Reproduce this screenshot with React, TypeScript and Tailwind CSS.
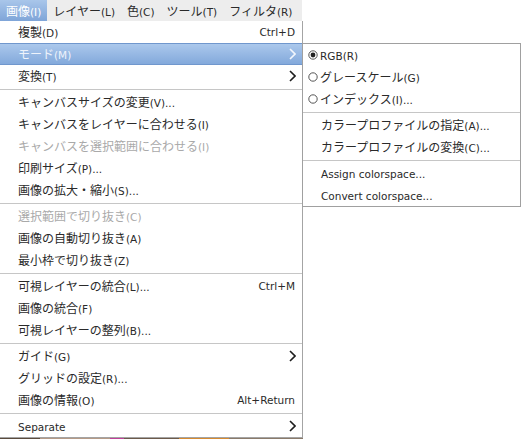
type Item =
  | { sep: true }
  | { sep?: false; label: string; key?: string; sub?: boolean; off?: boolean; hot?: boolean };

const mainItems: Item[] = [
  { label: "複製(D)", key: "Ctrl+D" },
  { label: "モード(M)", sub: true, hot: true },
  { label: "変換(T)", sub: true },
  { sep: true },
  { label: "キャンバスサイズの変更(V)..." },
  { label: "キャンバスをレイヤーに合わせる(I)" },
  { label: "キャンバスを選択範囲に合わせる(I)", off: true },
  { label: "印刷サイズ(P)..." },
  { label: "画像の拡大・縮小(S)..." },
  { sep: true },
  { label: "選択範囲で切り抜き(C)", off: true },
  { label: "画像の自動切り抜き(A)" },
  { label: "最小枠で切り抜き(Z)" },
  { sep: true },
  { label: "可視レイヤーの統合(L)...", key: "Ctrl+M" },
  { label: "画像の統合(F)" },
  { label: "可視レイヤーの整列(B)..." },
  { sep: true },
  { label: "ガイド(G)", sub: true },
  { label: "グリッドの設定(R)..." },
  { label: "画像の情報(O)", key: "Alt+Return" },
  { sep: true },
  { label: "Separate", sub: true },
];

const menuBar = ["画像(I)", "レイヤー(L)", "色(C)", "ツール(T)", "フィルタ(R)"];

const cjk = /([\u3000-\u30ff\u3400-\u9fff\uff00-\uffef]+)/;

// mixed runs: japanese glyphs a bit larger than the latin ones, like the gtk fallback
function Txt({ s }: { s: string }) {
  return (
    <span className="whitespace-nowrap">
      {s.split(cjk).filter(Boolean).map((part, i) =>
        cjk.test(part) ? (
          <span key={i} className="text-[12px]">{part}</span>
        ) : (
          <span key={i} className="text-[10.5px]">{part}</span>
        )
      )}
    </span>
  );
}

function Chevron({ light }: { light?: boolean }) {
  return (
    <svg width="7" height="12" viewBox="0 0 7 12" className="shrink-0">
      <path d="M1 1 L6 6 L1 11" fill="none" stroke={light ? "#f2f6fc" : "#1e1e1e"} strokeWidth="1.6" />
    </svg>
  );
}

function Radio({ on }: { on?: boolean }) {
  return (
    <svg width="10" height="10" viewBox="0 0 10 10" className="shrink-0">
      <circle cx="5" cy="5" r="4.2" fill="none" stroke="#444" strokeWidth="0.9" />
      {on && <circle cx="5" cy="5" r="2.4" fill="#222" />}
    </svg>
  );
}

function Sep() {
  return (
    <div className="h-[4px] flex items-center">
      <div className="h-px w-full bg-[#c6c6c6]" />
    </div>
  );
}

export default function App() {
  return (
    <div
      className="relative w-[521px] h-[439px] overflow-hidden bg-white text-[#2a2a2a] leading-none"
      style={{ fontFamily: '"DejaVu Sans", "Noto Sans CJK JP", sans-serif' }}
    >
      <div className="flex h-[21px] w-[302px] bg-[#ededed]">
        {menuBar.map((m, i) => (
          <div
            key={m}
            className={
              i === 0
                ? "flex items-center px-[6px] bg-gradient-to-b from-[#a9c6ea] to-[#7fa5d8] text-white"
                : "flex items-center px-[6px] text-[#2a2a2a]"
            }
          >
            <Txt s={m} />
          </div>
        ))}
      </div>

      <div className="w-[303px] border-r border-b border-[#a4a4a4] bg-white">
        {mainItems.map((it, i) =>
          it.sep ? (
            <Sep key={i} />
          ) : (
            <div
              key={i}
              className={
                it.hot
                  ? "flex h-[22px] items-center justify-between pl-[18px] pr-[6px] border-y border-[#7097cd] bg-gradient-to-b from-[#abc8ec] to-[#83a9db] text-[#eef3fb]"
                  : it.off
                  ? "flex h-[22px] items-center justify-between pl-[18px] pr-[6px] text-[#a9a9a9]"
                  : "flex h-[22px] items-center justify-between pl-[18px] pr-[6px]"
              }
            >
              <Txt s={it.label} />
              {it.key && <span className="text-[10.5px] pr-px">{it.key}</span>}
              {it.sub && <Chevron light={it.hot} />}
            </div>
          )
        )}
      </div>
      <div className="flex h-[2px] w-[303px]">
        <div className="w-[40px] bg-[#5a4a3c]" />
        <div className="w-[70px] bg-[#b59a86]" />
        <div className="w-[14px] bg-[#c0409a]" />
        <div className="w-[55px] bg-[#6c5a4a]" />
        <div className="w-[50px] bg-[#d68a30]" />
        <div className="flex-1 bg-[#8a7a6a]" />
      </div>

      <div className="absolute left-[302px] top-[43px] w-[219px] border border-[#a0a0a0] bg-white">
        <div className="flex h-[22px] items-center gap-[2px] pl-[5px]">
          <Radio on />
          <Txt s="RGB(R)" />
        </div>
        <div className="flex h-[22px] items-center gap-[2px] pl-[5px]">
          <Radio />
          <Txt s="グレースケール(G)" />
        </div>
        <div className="flex h-[22px] items-center gap-[2px] pl-[5px]">
          <Radio />
          <Txt s="インデックス(I)..." />
        </div>
        <Sep />
        <div className="flex h-[22px] items-center pl-[18px]">
          <Txt s="カラープロファイルの指定(A)..." />
        </div>
        <div className="flex h-[22px] items-center pl-[18px]">
          <Txt s="カラープロファイルの変換(C)..." />
        </div>
        <Sep />
        <div className="flex h-[22px] items-center pl-[18px]">
          <Txt s="Assign colorspace..." />
        </div>
        <div className="flex h-[22px] items-center pl-[18px]">
          <Txt s="Convert colorspace..." />
        </div>
      </div>
    </div>
  );
}
